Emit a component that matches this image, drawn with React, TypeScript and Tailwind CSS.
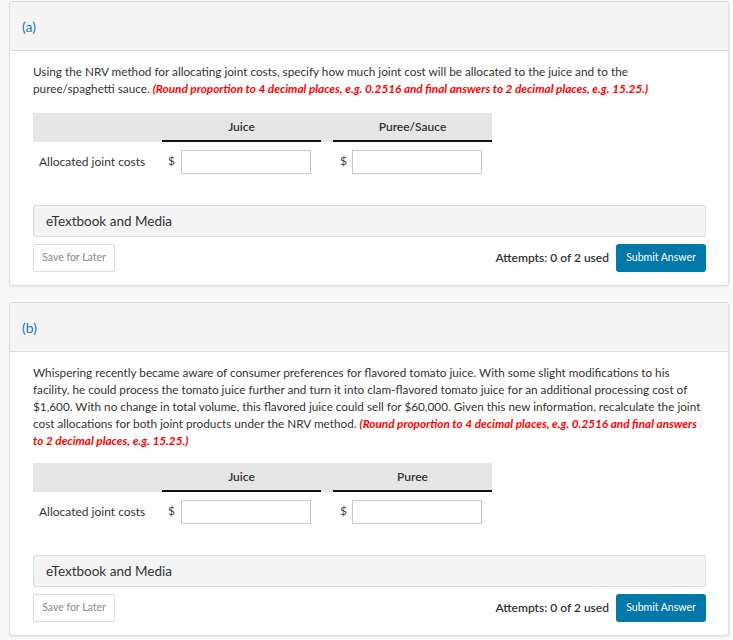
import React from "react";

const font = { fontFamily: "Lato, 'Noto Sans', sans-serif" };

function Table({ second }: { second: string }) {
  return (
    <div className="w-[459px] text-[12px] text-[#333]">
      <div className="flex h-[29px] bg-[#e6e6e6]">
        <div className="w-[129px]" />
        <div className="w-[159px] flex items-center justify-center border-b-2 border-[#111] font-semibold">Juice</div>
        <div className="w-[12px]" />
        <div className="w-[159px] flex items-center justify-center border-b-2 border-[#111] font-semibold">{second}</div>
      </div>
      <div className="flex items-center mt-[8px] h-[24px]">
        <div className="w-[129px] pl-[6px]">Allocated joint costs</div>
        <div className="w-[159px] flex items-center">
          <span className="w-[19px] pl-[6px] text-[#444] self-start pt-[2px]">$</span>
          <input className="w-[130px] h-[24px] border border-[#c9c9c9] bg-white outline-none" />
        </div>
        <div className="w-[12px]" />
        <div className="w-[159px] flex items-center">
          <span className="w-[19px] pl-[7px] text-[#444] self-start pt-[2px]">$</span>
          <input className="w-[130px] h-[24px] border border-[#c9c9c9] bg-white outline-none" />
        </div>
      </div>
    </div>
  );
}

function Card({
  label,
  text,
  second,
  textMb,
}: {
  label: string;
  text: React.ReactNode;
  second: string;
  textMb: string;
}) {
  return (
    <div className="ml-[9px] w-[720px] bg-white border border-[#dcdcdc] rounded-[3px] shadow-[0_1px_2px_rgba(0,0,0,0.08)]">
      <div className="h-[49px] bg-[#f4f4f4] border-b border-[#dcdcdc] flex items-center pl-[12px] text-[14px] text-[#1a79b8]">
        {label}
      </div>
      <div className="pl-[23px] pr-[22px] pt-[12px] pb-[13px]">
        <p className={`text-[11.75px] leading-[17px] text-[#333] ${textMb}`}>{text}</p>
        <Table second={second} />
        <div className="mt-[31px] h-[32px] bg-[#f4f4f4] border border-[#dcdcdc] rounded-[2px] flex items-center pl-[12px] text-[13.5px] text-[#333]">
          eTextbook and Media
        </div>
        <div className="mt-[7px] flex items-center justify-between">
          <button className="h-[28px] w-[82px] bg-white border border-[#dcdcdc] rounded-[2px] text-[10.5px] text-[#8a8a8a]">
            Save for Later
          </button>
          <div className="flex items-center gap-[7px]">
            <span className="text-[12px] font-semibold text-[#333]">Attempts: 0 of 2 used</span>
            <button className="h-[28px] w-[90px] bg-[#0277a9] rounded-[3px] text-[10.5px] text-white">
              Submit Answer
            </button>
          </div>
        </div>
      </div>
    </div>
  );
}

const red = (s: string) => <span className="text-[#ff0000] font-bold italic">{s}</span>;

export default function App() {
  return (
    <div style={font} className="w-[733px] h-[640px] bg-[#f9f9f9] pt-[1px]">
      <Card
        label="(a)"
        second="Puree/Sauce"
        textMb="mb-[16px]"
        text={
          <>
            Using the NRV method for allocating joint costs, specify how much joint cost will be allocated to the juice and to the puree/spaghetti sauce.{" "}
            {red("(Round proportion to 4 decimal places, e.g. 0.2516 and final answers to 2 decimal places, e.g. 15.25.)")}
          </>
        }
      />
      <div className="h-[16px]" />
      <Card
        label="(b)"
        second="Puree"
        textMb="mb-[14px]"
        text={
          <>
            Whispering recently became aware of consumer preferences for flavored tomato juice. With some slight modifications to his facility, he could process the tomato juice further and turn it into clam-flavored tomato juice for an additional processing cost of $1,600. With no change in total volume, this flavored juice could sell for $60,000. Given this new information, recalculate the joint cost allocations for both joint products under the NRV method.{" "}
            {red("(Round proportion to 4 decimal places, e.g. 0.2516 and final answers to 2 decimal places, e.g. 15.25.)")}
          </>
        }
      />
    </div>
  );
}
